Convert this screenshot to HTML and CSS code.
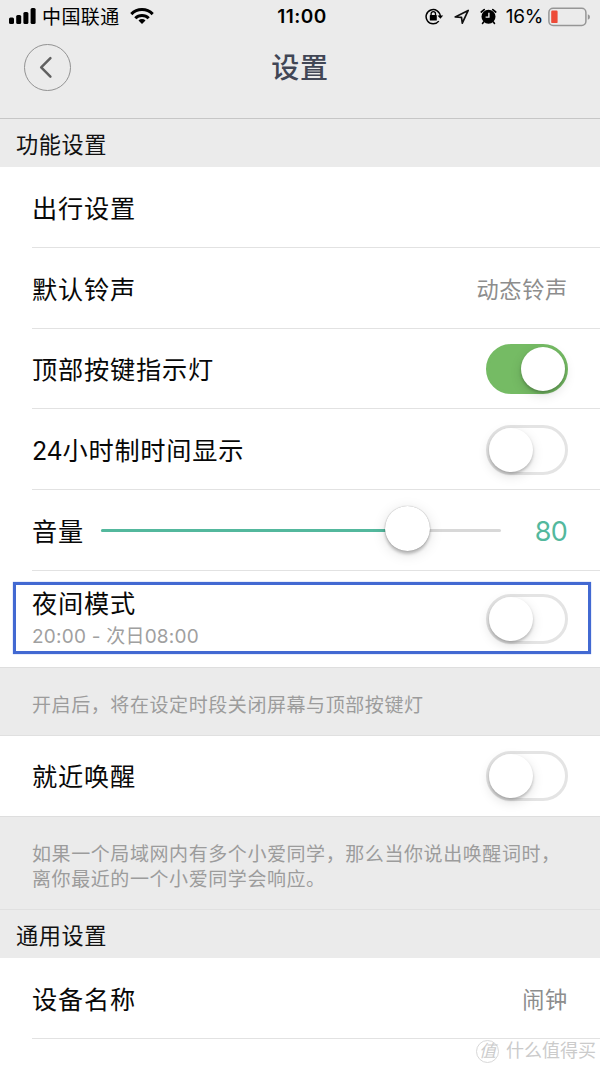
FILE: index.html
```html
<!DOCTYPE html>
<html lang="zh-CN">
<head>
<meta charset="utf-8">
<title>设置</title>
<link rel="stylesheet" href="styles.css">
</head>
<body>
<main class="screen">
  <header class="header">
    <div class="status">
      <div class="status-left">
        <svg class="signal" width="27" height="17" viewBox="0 0 27 17"><rect x="0" y="9.5" width="5" height="6.5" rx="1.5"/><rect x="7.2" y="7" width="5" height="9" rx="1.5"/><rect x="14.4" y="4" width="5" height="12" rx="1.5"/><rect x="21.6" y="0" width="5" height="16" rx="1.5"/></svg>
        <span class="carrier">中国联通</span>
        <svg class="wifi" width="24" height="17" viewBox="0 0 24 17"><g fill="none" stroke="#000" stroke-width="3"><path d="M1.3 6.1a15 15 0 0 1 21.4 0"/><path d="M5.3 10.2a9.4 9.4 0 0 1 13.4 0"/></g><path d="M12 16l-3.5-3.5a5 5 0 0 1 7 0z"/></svg>
      </div>
      <span class="clock">11:00</span>
      <div class="status-right">
        <svg class="lock" width="19" height="17" viewBox="0 0 19 17"><path d="M13.8 13.1A7.1 7.1 0 1 1 15.3 8.4" fill="none" stroke="#000" stroke-width="1.5"/><path d="M12.5 7.5h5.7l-2.8 3.3z"/><rect x="4.8" y="7.1" width="7" height="5.4" rx=".6"/><path d="M6.1 7.5V5.8a2.2 2.2 0 0 1 4.4 0v1.7" fill="none" stroke="#000" stroke-width="1.3"/></svg>
        <svg class="arrow" width="16" height="16" viewBox="0 0 16 16"><path d="M1.2 7.9L14.2 1.4 8.3 14.2 7.5 8.3z" fill="none" stroke="#111" stroke-width="1.7" stroke-linejoin="round"/></svg>
        <svg class="alarm" width="17" height="17" viewBox="0 0 17 17"><circle cx="8.5" cy="8.8" r="7"/><path d="M1.3 4L4.2 1.6M15.7 4L12.8 1.6" fill="none" stroke="#000" stroke-width="1.7" stroke-linecap="round"/><path d="M3.6 14L2.5 15.4M13.4 14l1.1 1.4" fill="none" stroke="#000" stroke-width="1.6" stroke-linecap="round"/><path d="M8.9 4.8v4.3H5.6" fill="none" stroke="#ebebeb" stroke-width="1.4"/></svg>
        <span class="percent">16%</span>
        <svg class="battery" width="43" height="20" viewBox="0 0 43 20"><rect x=".9" y="1.2" width="37" height="17.3" rx="4.2" fill="none" stroke="#969696" stroke-width="1.5"/><rect x="3.2" y="3.6" width="6.4" height="12.5" rx="1.2" fill="#ed4b38"/><path d="M39.8 7.2q2.2.7 2.2 2.8t-2.2 2.8z" fill="#969696"/></svg>
      </div>
    </div>
    <div class="nav">
      <button class="back" aria-label="返回"><svg width="45" height="45" viewBox="0 0 45 45"><path d="M25.4 13.2L16.2 22.4l9.2 9.2" fill="none" stroke="#606060" stroke-width="2.5" stroke-linecap="round" stroke-linejoin="round"/></svg></button>
      <h1 class="title">设置</h1>
    </div>
  </header>

  <h2 class="section">功能设置</h2>
  <section class="group">
    <div class="row plain"><span class="label">出行设置</span></div>
    <div class="row plain"><span class="label">默认铃声</span><span class="value">动态铃声</span></div>
    <div class="row"><span class="label">顶部按键指示灯</span><span class="switch on"><i class="knob"></i></span></div>
    <div class="row"><span class="label"><span class="digits">24</span>小时制时间显示</span><span class="switch"><i class="knob"></i></span></div>
    <div class="row volume"><span class="label">音量</span><div class="slider"><div class="fill"></div><i class="thumb"></i></div><span class="amount">80</span></div>
    <div class="row night">
      <div class="stack"><span class="label">夜间模式</span><span class="period">20:00 - 次日08:00</span></div>
      <span class="switch"><i class="knob"></i></span>
      <div class="highlight"></div>
    </div>
  </section>
  <p class="note note-short">开启后，将在设定时段关闭屏幕与顶部按键灯</p>
  <section class="group"><div class="row last"><span class="label">就近唤醒</span><span class="switch"><i class="knob"></i></span></div></section>
  <p class="note note-long">如果一个局域网内有多个小爱同学，那么当你说出唤醒词时，<br>离你最近的一个小爱同学会响应。</p>
  <h2 class="section general">通用设置</h2>
  <section class="group"><div class="row plain"><span class="label">设备名称</span><span class="value">闹钟</span></div></section>
  <div class="watermark"><span class="seal">值</span><span class="brand">什么值得买</span></div>
</main>
</body>
</html>
```
FILE: styles.css
```css
* { box-sizing: border-box; }
body { margin: 0; background: #fff; font-family: Inter, "Noto Sans CJK SC", sans-serif; color: #111; }
.screen { position: relative; width: 600px; height: 1067px; overflow: hidden; background: #fff; }
.header { height: 119px; background: #ebebeb; border-bottom: 1px solid #c6c6c6; }
.status { display: grid; grid-template-columns: 1fr auto 1fr; align-items: center; height: 33px; padding: 0 9px; color: #000; line-height: 24px; white-space: nowrap; }
.status-left, .status-right { display: flex; align-items: center; }
.status-right { justify-content: flex-end; }
.signal { margin-right: 6px; }
.carrier { font-size: 19px; letter-spacing: .4px; padding-top: 2px; }
.wifi { margin-left: 10px; }
.clock { font-size: 19px; font-weight: 600; letter-spacing: .5px; transform: translateX(2px); }
.arrow { margin-left: 10px; }
.alarm { margin-left: 10px; }
.percent { margin-left: 9px; font-size: 19px; letter-spacing: -.3px; }
.battery { margin-left: 5px; }
.nav { display: grid; grid-template-columns: 48px 1fr 48px; align-items: center; height: 69px; padding: 0 24px; }
.back { width: 47px; height: 47px; padding: 0; border: 1px solid #929292; border-radius: 50%; background: none; display: grid; place-items: center; }
.title { margin: 0; padding-top: 1px; text-align: center; font-size: 28px; line-height: 40px; letter-spacing: .8px; font-weight: 500; color: #414655; }
.section { margin: 0; height: 48px; padding-left: 16px; background: #ebebeb; font-size: 22.2px; line-height: 52px; font-weight: 400; letter-spacing: .6px; }
.general { height: 49px; border-top: 1px solid #e0e0e0; }
.row { position: relative; display: flex; align-items: center; justify-content: space-between; height: 80.8px; margin-left: 32px; padding: 2px 32px 0 0; border-bottom: 1px solid #e2e2e2; }
.plain { padding-top: 4px; }
.label { padding-top: 1px; font-size: 25.2px; line-height: 36px; letter-spacing: .8px; color: #080808; white-space: nowrap; }
.digits { font-size: 25px; font-weight: 400; letter-spacing: -.3px; }
.value { padding-top: 1px; font-size: 22.2px; line-height: 32px; letter-spacing: .7px; color: #8d8d8d; }
.switch { width: 82px; height: 50px; border: 3px solid #e4e4e4; border-radius: 25px; background: #fff; display: flex; align-items: center; }
.knob { display: block; flex: none; width: 44px; height: 44px; border-radius: 50%; background: #fff; box-shadow: 0 2px 3px rgba(0,0,0,.22), 0 4px 12px rgba(0,0,0,.13); }
.on { border-color: #75bb64; background: #75bb64; justify-content: flex-end; }
.volume { justify-content: flex-start; padding-top: 1px; }
.volume .label { padding-top: 3px; }
.slider { position: relative; width: 400px; height: 3px; margin-left: 17px; border-radius: 2px; background: #d8d8d8; }
.fill { width: 306px; height: 3px; border-radius: 2px; background: #53b89d; }
.thumb { position: absolute; left: 284px; top: -23px; width: 45px; height: 45px; border-radius: 50%; background: #fff; box-shadow: 0 0 1px rgba(0,0,0,.4), 0 3px 3px rgba(0,0,0,.22), 0 3px 14px rgba(0,0,0,.13); }
.amount { margin-left: auto; padding: 2px 1px 0 0; font-size: 27px; letter-spacing: -.8px; color: #53b89d; }
.night { height: 97px; margin-left: 0; padding: 0 32px; border-color: #dedede; }
.night .label { padding: 0; line-height: 34px; }
.stack { display: flex; flex-direction: column; }
.period { padding-top: 1px; margin-bottom: -1px; font-size: 19px; font-weight: 400; line-height: 30px; letter-spacing: .22px; color: #a0a0a0; }
.highlight { position: absolute; left: 13px; top: 11px; width: 578px; height: 72px; border: 3px solid #4269d2; box-shadow: 0 0 1px #7594e6; }
.note { margin: 0; padding: 0 32px; background: #ebebeb; color: #9c9c9c; font-size: 19px; line-height: 25px; letter-spacing: .58px; white-space: nowrap; }
.note-short { height: 68px; padding-top: 25px; border-bottom: 1px solid #e0e0e0; }
.note-long { height: 92px; padding-top: 25px; }
.last { margin-left: 0; padding: 1px 32px 0; border-color: #dedede; }
.last .label { padding-top: 2px; }
.watermark { position: absolute; right: 4px; bottom: 3px; display: flex; align-items: center; gap: 7px; color: #cbcbcb; }
.seal { width: 23px; height: 23px; border: 1px solid #d8d8d8; border-radius: 50%; background: #fff; text-align: center; font-size: 17px; line-height: 20px; font-style: italic; }
.brand { font-size: 18px; line-height: 26px; }
```
